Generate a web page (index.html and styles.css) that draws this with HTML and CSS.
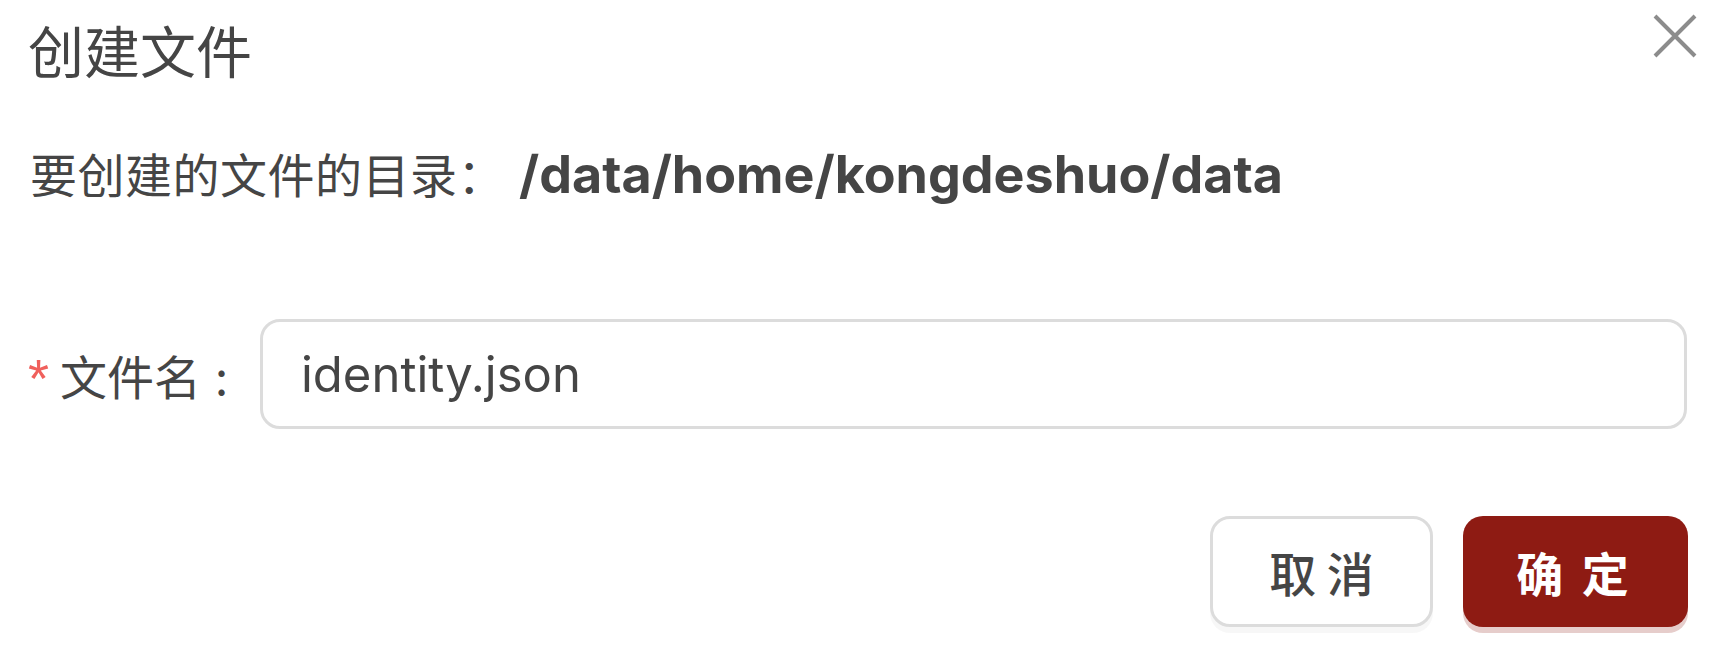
FILE: index.html
```html
<!DOCTYPE html>
<html lang="zh-CN">
<head>
<meta charset="utf-8">
<title>创建文件</title>
<link rel="stylesheet" href="styles.css">
</head>
<body>
<div class="modal">
  <div class="modal-header">
    <h2 class="modal-title">创建文件</h2>
    <button class="modal-close" aria-label="关闭">
      <svg width="44" height="44" viewBox="0 0 44 44"><path d="M2 2 L42 42 M42 2 L2 42" stroke="#8c8c8c" stroke-width="4" fill="none"/></svg>
    </button>
  </div>
  <div class="modal-body">
    <p class="dir-line"><span class="dir-label">要创建的文件的目录：</span><strong class="dir-path">/data/home/kongdeshuo/data</strong></p>
    <div class="form-row">
      <label class="form-label"><span class="required">*</span>文件名<span class="colon">:</span></label>
      <div class="input-box"><span class="input-value">identity.json</span></div>
    </div>
  </div>
  <div class="modal-footer">
    <button class="btn btn-default">取 消</button>
    <button class="btn btn-primary">确 定</button>
  </div>
</div>
</body>
</html>
```
FILE: styles.css
```css
* { box-sizing: border-box; }
html, body { margin: 0; padding: 0; background: #fff; }
body {
  font-family: "Noto Sans CJK SC", "Noto Sans", sans-serif;
  color: #454545;
}
.modal {
  width: 1728px;
  height: 652px;
  padding: 0 41px 0 28px;
  display: flex;
  flex-direction: column;
}
.modal-header {
  display: flex;
  justify-content: space-between;
  align-items: flex-start;
  height: 98px;
}
.modal-title {
  margin: 0;
  padding-top: 9px;
  font-size: 56px;
  line-height: 80px;
  font-weight: 400;
  color: #454545;
}
.modal-close {
  margin-top: 14px;
  margin-right: -10px;
  padding: 0;
  border: 0;
  background: none;
  width: 44px;
  height: 44px;
  display: flex;
}
.modal-body { display: flex; flex-direction: column; }
.dir-line {
  margin: 40px 0 0 2px;
  font-size: 47px;
  line-height: 70px;
  display: flex;
  align-items: baseline;
}
.dir-label {
  letter-spacing: 0.5px;
}
.dir-path {
  font-family: "Inter", "Noto Sans", sans-serif;
  font-weight: 700;
  font-size: 52px;
  margin-left: 14px;
}
.form-row {
  margin-top: 109px;
  display: flex;
  align-items: center;
}
.form-label {
  font-size: 47px;
  display: flex;
  align-items: center;
  width: 232px;
  flex: none;
}
.required {
  color: #f0605c;
  font-family: "Liberation Sans", sans-serif;
  font-size: 54px;
  line-height: 1;
  margin-right: 11px;
  position: relative;
  top: 4px;
}
.colon {
  margin-left: 14px;
}
.input-box {
  flex: 1;
  height: 110px;
  border: 3px solid #dcdcdc;
  border-radius: 20px;
  display: flex;
  align-items: center;
  padding-left: 38px;
}
.input-value {
  font-family: "Inter", "Noto Sans", sans-serif;
  font-size: 49px;
  color: #454545;
}
.modal-footer {
  margin-top: 87px;
  display: flex;
  justify-content: flex-end;
  gap: 30px;
  margin-right: -1px;
}
.btn {
  height: 111px;
  border-radius: 20px;
  font-family: "Noto Sans CJK SC", sans-serif;
  font-size: 47px;
  font-weight: 500;
  padding: 0;
  cursor: pointer;
}
.btn-default {
  width: 223px;
  background: #fff;
  border: 3px solid #dcdcdc;
  color: #454545;
  box-shadow: 0 6px 0 rgba(0, 0, 0, 0.03);
}
.btn-primary {
  width: 225px;
  background: #8e1b13;
  border: 0;
  color: #fff;
  font-weight: 700;
  letter-spacing: 4px;
  padding-right: 2px;
  box-shadow: 0 6px 0 rgba(142, 27, 19, 0.22);
}
```
